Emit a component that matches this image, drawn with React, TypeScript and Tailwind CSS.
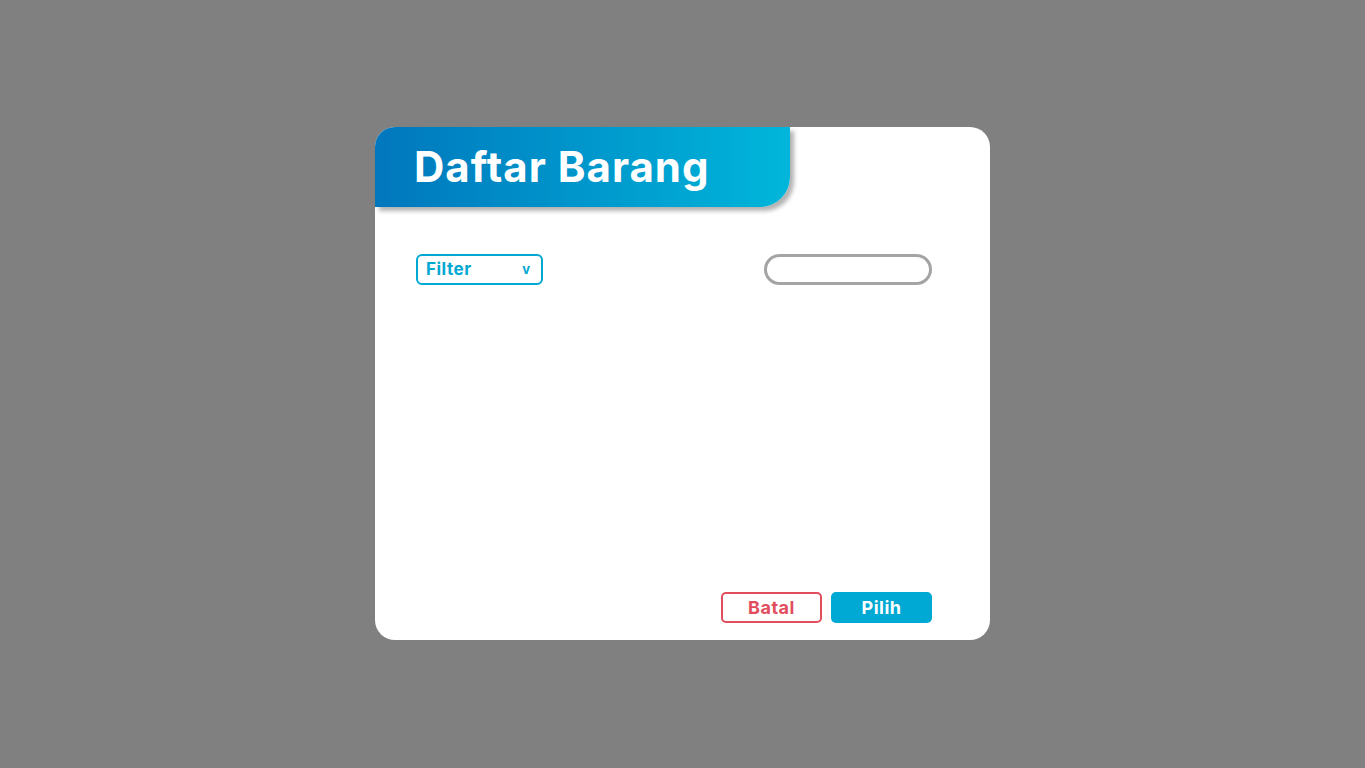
export default function App() {
  return (
    <div className="min-h-screen w-full bg-[#808080] flex items-center justify-center" style={{ fontFamily: 'Inter, "Open Sans", sans-serif' }}>
      <div className="w-[615px] h-[513px] -mt-px bg-white rounded-[20px] flex flex-col">
        <div className="w-[415px] h-[80px] rounded-tl-[20px] rounded-br-[30px] bg-gradient-to-r from-[#0277bd] to-[#00b6da] shadow-[4px_4px_4px_rgba(0,0,0,0.3)] flex items-center pl-[39px]">
          <h1 className="text-[42px] font-bold text-white tracking-[1px] leading-none">Daftar Barang</h1>
        </div>

        <div className="flex-1 flex flex-col pl-[41px] pr-[58px] pt-[47px] pb-[17px]">
          <div className="flex items-center justify-between">
            <button className="w-[127px] h-[31px] border-2 border-[#00a8d2] rounded-[6px] flex items-center justify-between pl-[8px] pr-[11px] text-[#00a8d2]">
              <span className="text-[17px] font-bold tracking-[0.5px]">Filter</span>
              <span className="text-[13px] font-bold">v</span>
            </button>
            <input className="w-[168px] h-[31px] border-[3px] border-[#a4a4a4] rounded-full outline-none px-3" />
          </div>

          <div className="flex-1" />

          <div className="flex justify-end gap-[9px]">
            <button className="w-[101px] h-[31px] border-2 border-[#e14e5e] rounded-[5px] text-[#e14e5e] text-[18px] font-bold tracking-[0.5px]">Batal</button>
            <button className="w-[101px] h-[31px] bg-[#00a9d3] rounded-[5px] text-white text-[18px] font-bold tracking-[0.5px]">Pilih</button>
          </div>
        </div>
      </div>
    </div>
  );
}
